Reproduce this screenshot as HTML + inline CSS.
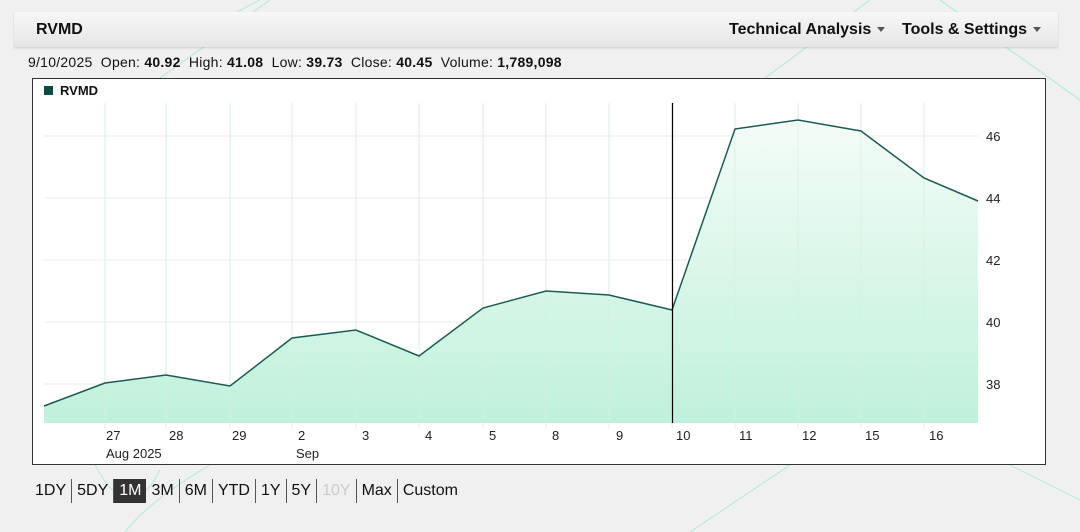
<!DOCTYPE html>
<html><head><meta charset="utf-8"><style>
body{margin:0;width:1080px;height:532px;background:#f0f0f0;font-family:"Liberation Sans",sans-serif;position:relative;overflow:hidden}
.hdr{position:absolute;left:14px;top:12px;width:1044px;height:35px;background:linear-gradient(#f7f7f7,#e6e6e6);box-shadow:0 1px 2px rgba(0,0,0,.15)}
.hdr b{position:absolute;top:9px;font-size:16px;color:#111}
.tri{display:inline-block;border-left:4px solid transparent;border-right:4px solid transparent;border-top:5px solid #555;margin-left:6px;vertical-align:middle}
.info{position:absolute;left:28px;top:54px;font-size:14px;color:#111;letter-spacing:0.25px}
.box{position:absolute;left:32px;top:78px;width:1012px;height:385px;background:#fff;border:1px solid #333}
.rng{position:absolute;left:30px;top:479px;font-size:16px;color:#111;display:flex;align-items:center}
.rng span{padding:0 5px;border-right:1px solid #555;line-height:24px}
.rng span:last-child{border:none}
</style></head><body>
<svg width="1080" height="532" style="position:absolute;left:0;top:0">
<g stroke="#b8ecd5" stroke-width="1.2" fill="none">
<line x1="270" y1="0" x2="160" y2="78"/><line x1="260" y1="0" x2="237" y2="12"/>
<line x1="870" y1="0" x2="765" y2="78"/><line x1="940" y1="0" x2="1080" y2="100"/>
<line x1="1010" y1="465" x2="1080" y2="500"/><line x1="790" y1="465" x2="690" y2="532"/>
<path d="M95 465 Q130 530 160 470"/><path d="M210 465 Q150 500 125 532"/>
</g></svg>
<div class="hdr"><b style="left:22px">RVMD</b><b style="left:715px">Technical Analysis<span class="tri"></span></b><b style="left:888px">Tools &amp; Settings<span class="tri"></span></b></div>
<div class="info">9/10/2025&nbsp; Open: <b>40.92</b>&nbsp; High: <b>41.08</b>&nbsp; Low: <b>39.73</b>&nbsp; Close: <b>40.45</b>&nbsp; Volume: <b>1,789,098</b></div>
<div class="box"></div>
<svg width="1080" height="532" style="position:absolute;left:0;top:0" font-family="Liberation Sans, sans-serif">
<defs><linearGradient id="g" x1="0" y1="0" x2="0" y2="1"><stop offset="0" stop-color="#f3fcf7"/><stop offset="1" stop-color="#bcf0d8"/></linearGradient></defs>
<rect x="44" y="86" width="9" height="9" fill="#0e4a45"/>
<text x="60" y="95" font-size="13" font-weight="bold" fill="#111">RVMD</text>
<g stroke="#ebebeb"><line x1="44" y1="136" x2="978" y2="136"/><line x1="44" y1="198" x2="978" y2="198"/><line x1="44" y1="260" x2="978" y2="260"/><line x1="44" y1="322" x2="978" y2="322"/><line x1="44" y1="384" x2="978" y2="384"/></g>
<g stroke="#ebebeb">
<line x1="105" y1="103" x2="105" y2="429"/><line x1="166" y1="103" x2="166" y2="429"/><line x1="230" y1="103" x2="230" y2="429"/><line x1="292" y1="103" x2="292" y2="429"/><line x1="356" y1="103" x2="356" y2="429"/><line x1="419" y1="103" x2="419" y2="429"/><line x1="483" y1="103" x2="483" y2="429"/><line x1="546" y1="103" x2="546" y2="429"/><line x1="609" y1="103" x2="609" y2="429"/><line x1="672" y1="103" x2="672" y2="429"/><line x1="735" y1="103" x2="735" y2="429"/><line x1="798" y1="103" x2="798" y2="429"/><line x1="861" y1="103" x2="861" y2="429"/><line x1="924" y1="103" x2="924" y2="429"/></g>
<path d="M44 406 L105 383 L166 375 L230 386 L292 338 L356 330 L419 356 L483 308 L546 291 L609 295 L672 310 L735 129 L798 120 L861 131 L924 178 L978 201 L978 423 L44 423Z" fill="url(#g)" opacity="0.95"/>
<g stroke="#d8efe3" opacity=".6"><line x1="105" y1="103" x2="105" y2="423"/><line x1="166" y1="103" x2="166" y2="423"/><line x1="230" y1="103" x2="230" y2="423"/><line x1="292" y1="103" x2="292" y2="423"/><line x1="356" y1="103" x2="356" y2="423"/><line x1="419" y1="103" x2="419" y2="423"/><line x1="483" y1="103" x2="483" y2="423"/><line x1="546" y1="103" x2="546" y2="423"/><line x1="609" y1="103" x2="609" y2="423"/><line x1="735" y1="103" x2="735" y2="423"/><line x1="798" y1="103" x2="798" y2="423"/><line x1="861" y1="103" x2="861" y2="423"/><line x1="924" y1="103" x2="924" y2="423"/></g>
<path d="M44 406 L105 383 L166 375 L230 386 L292 338 L356 330 L419 356 L483 308 L546 291 L609 295 L672 310 L735 129 L798 120 L861 131 L924 178 L978 201" fill="none" stroke="#1d5a55" stroke-width="1.5"/>
<line x1="672.5" y1="103" x2="672.5" y2="423" stroke="#000" stroke-width="1.2"/>
<g font-size="13" fill="#222"><text x="986" y="141">46</text><text x="986" y="203">44</text><text x="986" y="265">42</text><text x="986" y="327">40</text><text x="986" y="389">38</text>
<text x="106" y="440">27</text><text x="169" y="440">28</text><text x="232" y="440">29</text><text x="298" y="440">2</text><text x="362" y="440">3</text><text x="425" y="440">4</text><text x="489" y="440">5</text><text x="552" y="440">8</text><text x="616" y="440">9</text><text x="676" y="440">10</text><text x="739" y="440">11</text><text x="802" y="440">12</text><text x="865" y="440">15</text><text x="929" y="440">16</text>
<text x="106" y="458">Aug 2025</text><text x="296" y="458">Sep</text></g>
</svg>
<div class="rng"><span>1DY</span><span>5DY</span><span style="background:#333;color:#fff;border:none">1M</span><span>3M</span><span>6M</span><span>YTD</span><span>1Y</span><span>5Y</span><span style="color:#ccc">10Y</span><span>Max</span><span>Custom</span></div>
</body></html>
